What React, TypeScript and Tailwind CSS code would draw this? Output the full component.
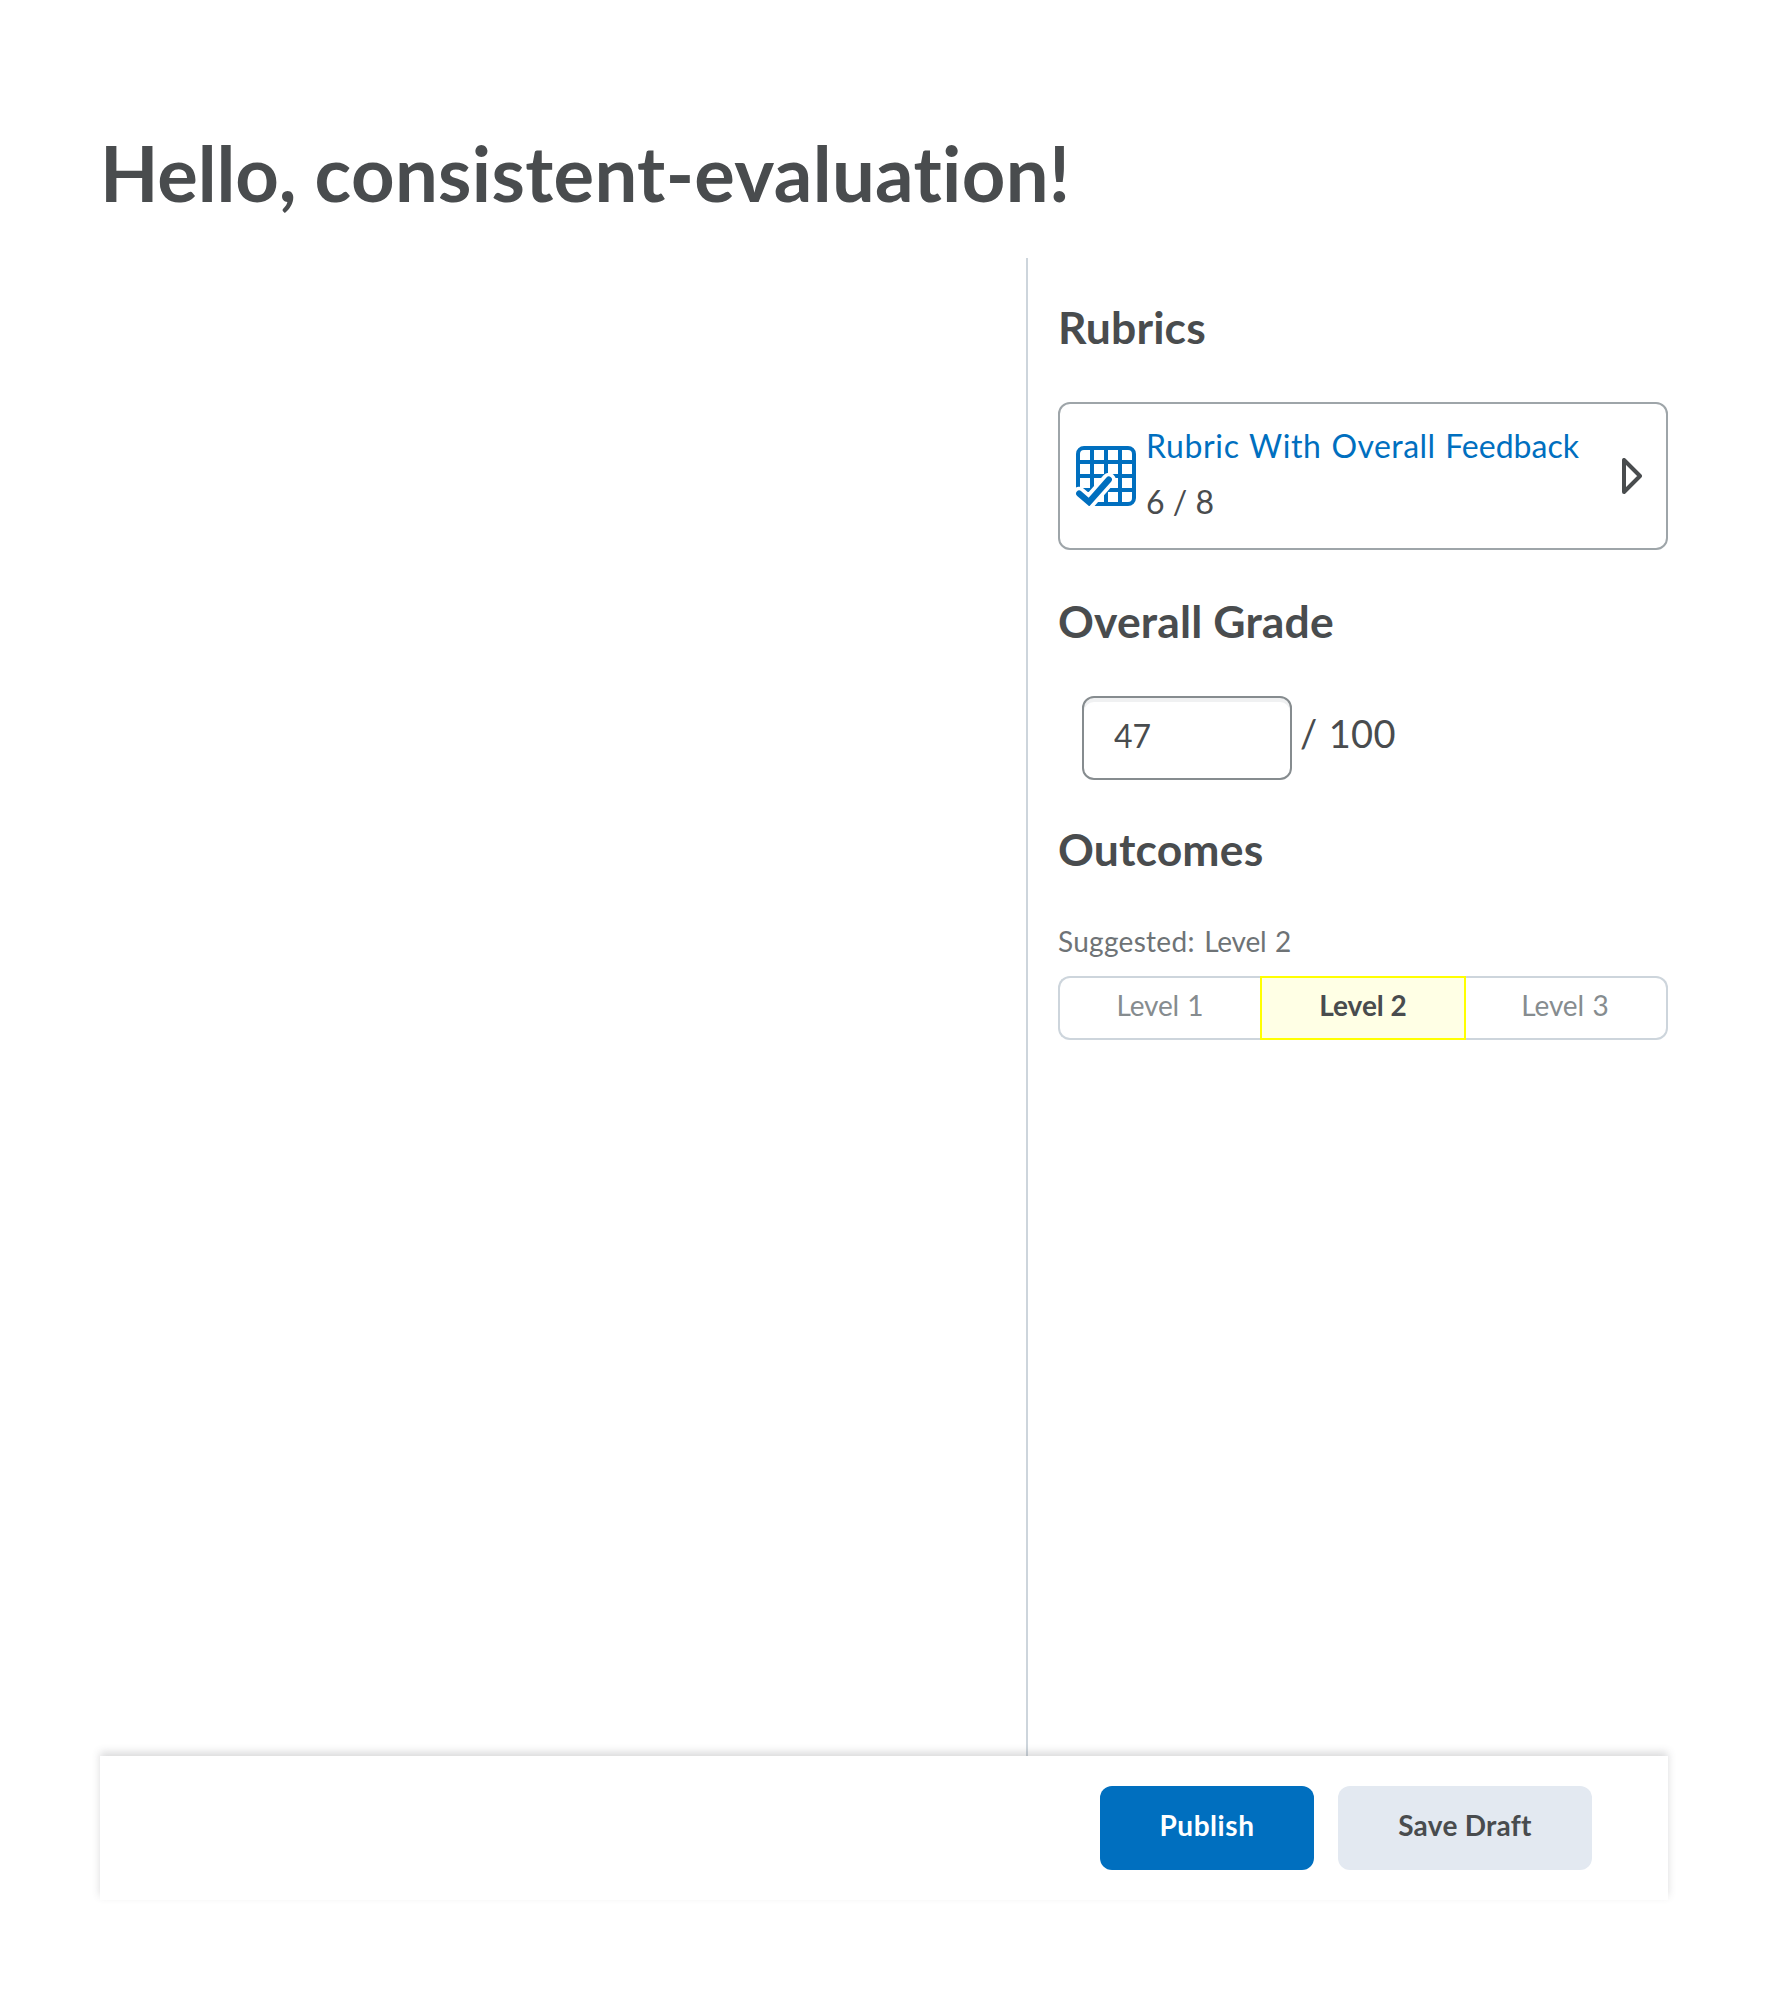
function RubricIcon() {
  return (
    <svg viewBox="0 0 30 30" className="h-[60px] w-[60px] shrink-0" fill="none">
      <g stroke="#006fbf" strokeWidth="2">
        <rect x="1" y="1" width="28" height="28" rx="3" />
        <path d="M8 1v28M15 1v28M22 1v28M1 8h28M1 15h28M1 22h28" />
      </g>
      <path d="M-1 22L6.5 28L9 31H-1z" fill="#fff" />
      <path d="M1.6 23.8L6.5 28L16.4 16.8" stroke="#fff" strokeWidth="6.8" strokeLinecap="round" />
      <path d="M1.6 23.8L6.5 28L16.4 16.8" stroke="#006fbf" strokeWidth="3.1" strokeLinecap="round" />
    </svg>
  );
}

function Heading({ children }: { children: string }) {
  return <h3 className="text-[44.46px] leading-[48px] font-bold tracking-[0.15px]">{children}</h3>;
}

export default function App() {
  return (
    <div className="min-h-[2000px] bg-white px-[100px] pt-[123px] font-['Lato',sans-serif] text-[#494c4e] [font-variant-ligatures:none]">
      <h1 className="text-[76px] leading-[100px] font-bold">
        <span className="tracking-[-0.15px]">Hello, </span>
        <span className="tracking-[0.33px]">consistent-evaluation!</span>
      </h1>

      <div className="mt-[35px] flex h-[1498px] justify-end">
        <aside className="w-[642px] border-l-2 border-[#cdd5dc] pt-[45px] pl-[30px]">
          <Heading>Rubrics</Heading>
          <div className="mt-[51px] flex h-[148px] items-center rounded-xl border-2 border-[#9ea5a9] pr-6 pl-4">
            <RubricIcon />
            <div className="-mt-1 ml-[10px] flex-1 text-[32px] leading-[56px]">
              <div className="whitespace-nowrap text-[#006fbf] [word-spacing:1px]">
                <span className="tracking-[0.02em]">Rubric With </span>
                <span className="tracking-[0.014em]">Overall </span>
                <span>Feedback</span>
              </div>
              <div>6 / 8</div>
            </div>
            <svg viewBox="0 0 20 36" className="h-9 w-5" fill="none">
              <path d="M2 2v32l16-16z" stroke="#494c4e" strokeWidth="4" strokeLinejoin="round" />
            </svg>
          </div>

          <div className="mt-[47px]">
            <Heading>Overall Grade</Heading>
          </div>
          <div className="mt-[51px] flex items-center pl-6">
            <input
              defaultValue="47"
              className="h-[84px] w-[210px] rounded-xl border-2 border-[#868c8f] px-[30px] pb-[5px] text-[32px] shadow-[inset_0_4px_0_0_#f0f1f2] outline-none"
            />
            <span className="ml-2 pb-[11px] text-[38px] leading-[72px] tracking-[0.01em] [word-spacing:1px]">/ 100</span>
          </div>

          <div className="mt-[45px]">
            <Heading>Outcomes</Heading>
          </div>
          <div className="mt-[50px] text-[28px] leading-9 text-[#6e7376]">
            <span className="tracking-[0.3px] [word-spacing:2px]">Suggested: </span>
            <span className="tracking-[-0.2px] [word-spacing:1.5px]">Level 2</span>
          </div>
          <div className="mt-[17px] flex h-16 text-center text-[28px] leading-[54px] text-[#868c8f]">
            <div className="w-[202px] rounded-l-xl border-2 border-r-0 border-[#cdd5dc] tracking-[-0.2px] [word-spacing:1.5px]">Level 1</div>
            <div className="w-[206px] border-2 border-[#ffff00] bg-[#ffffe5] font-bold text-[#494c4e]">Level 2</div>
            <div className="w-[202px] rounded-r-xl border-2 border-l-0 border-[#cdd5dc] pr-[2px] tracking-[-0.1px] [word-spacing:1.5px]">Level 3</div>
          </div>
        </aside>
      </div>

      <footer className="relative flex h-36 items-center justify-end gap-6 bg-white pr-[76px] text-[28px] font-bold shadow-[0_-4px_8px_rgba(73,76,78,0.2)]">
        <button className="h-[84px] w-[214px] rounded-xl bg-[#006fbf] pb-1.5 tracking-[0.02em] text-white">Publish</button>
        <button className="h-[84px] w-[254px] rounded-xl bg-[#e3e9f1] pb-1.5 tracking-[0.01em]">Save Draft</button>
      </footer>
    </div>
  );
}
